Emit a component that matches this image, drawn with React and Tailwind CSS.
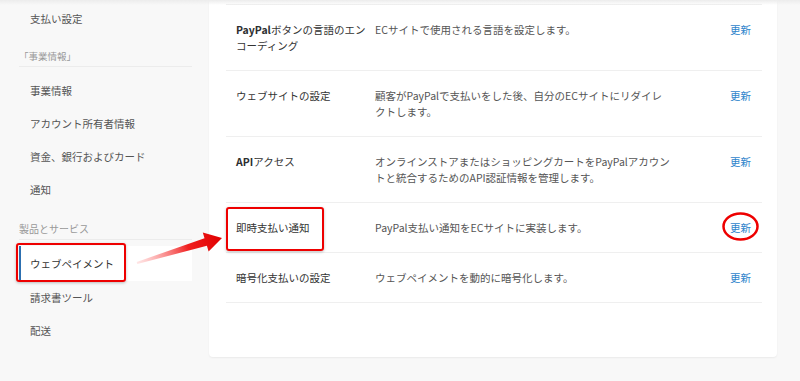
import React from 'react';

const font = { fontFamily: '"Noto Sans CJK JP", "Noto Sans", sans-serif' };

const sideBiz = ['事業情報', 'アカウント所有者情報', '資金、銀行およびカード', '通知'];

const sideProd = ['ウェブペイメント', '請求書ツール', '配送'];

const rows = [
  {
    label: (
      <>
        <b className="font-bold text-[#2c2e2f]">PayPal</b>ボタンの言語のエン
        <br />
        コーディング
      </>
    ),
    desc: 'ECサイトで使用される言語を設定します。',
  },
  {
    label: 'ウェブサイトの設定',
    desc: (
      <>
        顧客がPayPalで支払いをした後、自分のECサイトにリダイレ
        <br />
        クトします。
      </>
    ),
  },
  {
    label: (
      <>
        <b className="font-bold text-[#2c2e2f]">API</b>アクセス
      </>
    ),
    desc: (
      <>
        オンラインストアまたはショッピングカートをPayPalアカウン
        <br />
        トと統合するためのAPI認証情報を管理します。
      </>
    ),
  },
  { label: '即時支払い通知', desc: 'PayPal支払い通知をECサイトに実装します。' },
  { label: '暗号化支払いの設定', desc: 'ウェブペイメントを動的に暗号化します。' },
];

function SideItem({ children, active }) {
  if (active) {
    return (
      <div className="h-[35px] mt-[6px] flex items-center bg-white border-l-2 border-[#2c6fb0] pl-[9px] text-[#333]">
        {children}
      </div>
    );
  }
  return <div className="h-[33px] flex items-center pl-[11px] text-[#555]">{children}</div>;
}

export default function App() {
  return (
    <div className="relative w-[800px] h-[381px] overflow-hidden bg-[#f8f8f8] text-[10.5px] leading-4" style={font}>
      <div className="flex h-full">
        {/* Sidebar */}
        <div className="w-[209px] pl-[19px] pr-[17px] pt-[2px]">
          <SideItem>支払い設定</SideItem>
          <div className="mt-[13px] pb-[2px] border-b border-[#ececec] text-[9.5px] text-[#999]">「事業情報」</div>
          <div className="mt-[7px]">
            {sideBiz.map((s) => (
              <SideItem key={s}>{s}</SideItem>
            ))}
          </div>
          <div className="mt-[15px] pb-[2px] border-b border-[#ececec] text-[10px] text-[#999]">製品とサービス</div>
          {sideProd.map((s, i) => (
            <SideItem key={s} active={i === 0}>
              {s}
            </SideItem>
          ))}
        </div>

        {/* Card */}
        <div className="w-[568px] h-[357px] bg-white rounded-b-[4px] shadow-[0_1px_2px_rgba(0,0,0,0.06)] pl-[17px] pr-[15px] pt-[4px]">
          <div className="border-t border-[#efefef]">
            {rows.map((r, i) => (
              <div key={i} className="flex border-b border-[#efefef] pt-[17px] pb-[16px]">
                <div className="w-[149px] pl-[10px] text-[#333]">{r.label}</div>
                <div className="flex-1 text-[#555]">{r.desc}</div>
                <div className="pr-[11px] text-[#2f86cc]">更新</div>
              </div>
            ))}
          </div>
        </div>
      </div>

      {/* top shade */}
      <div className="absolute top-0 left-0 right-0 h-[5px] bg-gradient-to-b from-[#ececec] to-transparent" />

      {/* annotations */}
      <div className="absolute left-[16px] top-[243px] w-[110px] h-[39px] border-2 border-[#ee0000] rounded-[3px] shadow-[0_1px_3px_rgba(0,0,0,0.25)]" />
      <div className="absolute left-[226px] top-[207px] w-[98px] h-[44px] border-2 border-[#ee0000] rounded-[3px] shadow-[0_1px_3px_rgba(0,0,0,0.25)]" />
      <svg className="absolute left-0 top-0" width="800" height="381">
        <defs>
          <linearGradient id="arr" x1="137" y1="263" x2="222" y2="237" gradientUnits="userSpaceOnUse">
            <stop offset="0" stopColor="#ff9a9a" stopOpacity="0.25" />
            <stop offset="0.6" stopColor="#f02020" />
            <stop offset="1" stopColor="#e00000" />
          </linearGradient>
        </defs>
        <polygon
          points="136.7,262 204.5,238.2 202.8,232.4 222,238 208.6,251.6 206.9,245.8 137.3,264"
          fill="url(#arr)"
        />
        <ellipse cx="740.5" cy="226.5" rx="17" ry="13" fill="none" stroke="#ee0000" strokeWidth="2.5" />
      </svg>
    </div>
  );
}
